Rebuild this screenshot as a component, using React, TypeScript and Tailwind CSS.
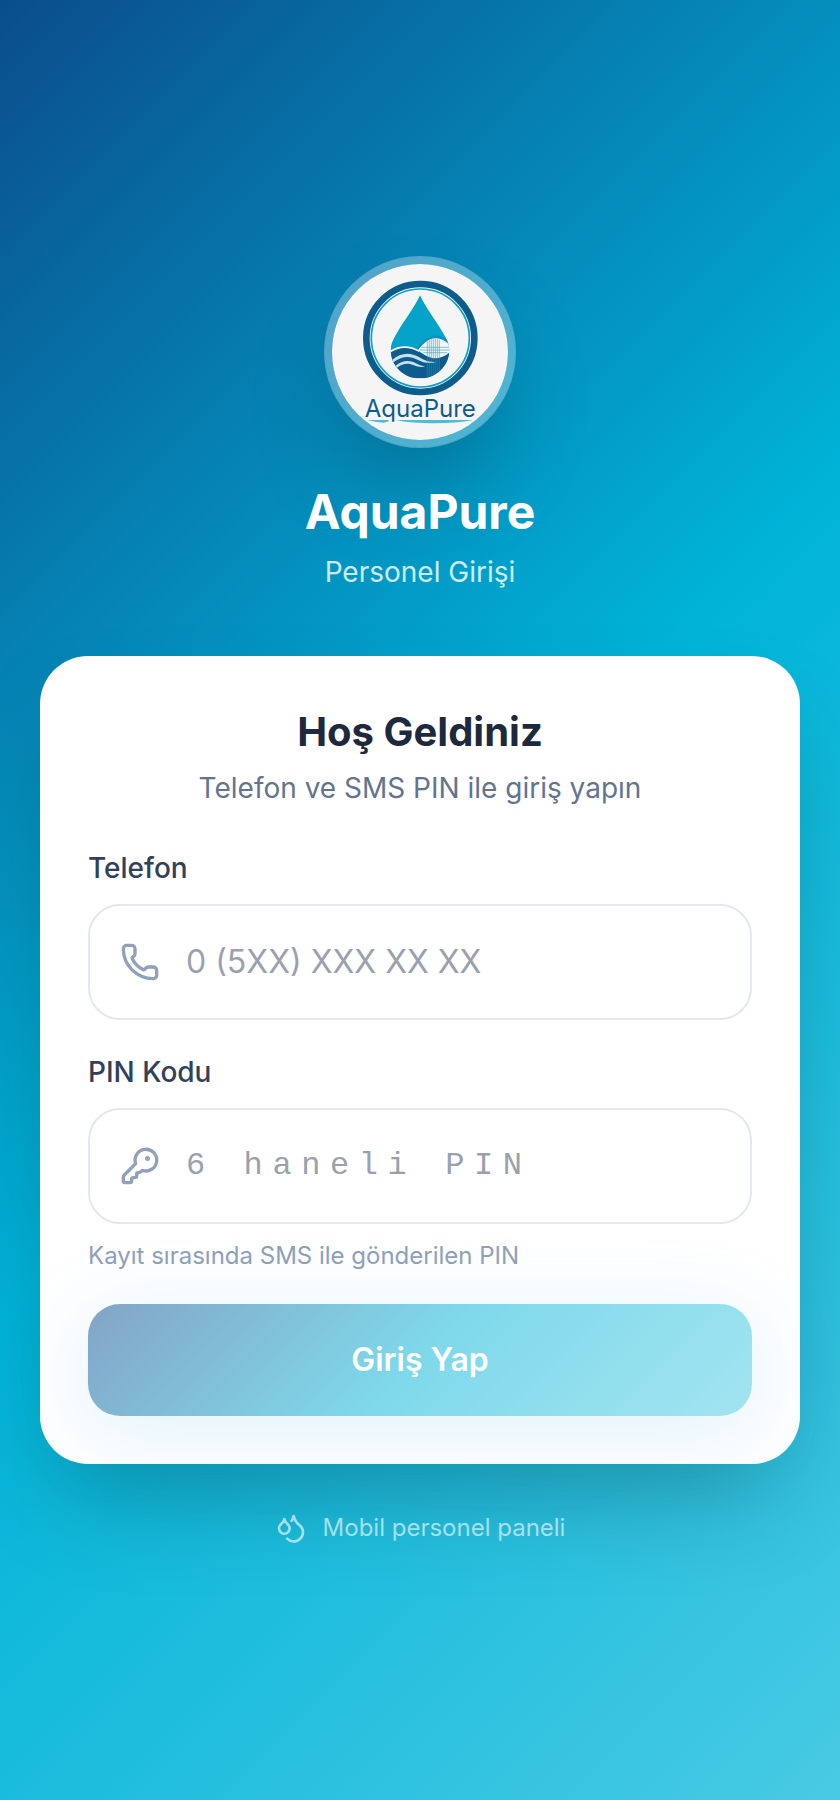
import React, { useState } from 'react'
import { Droplets, KeyRound, Phone } from 'lucide-react'

function AquaPureLogo() {
  return (
    <svg viewBox="66 72 528 528" className="h-full w-full" role="img" aria-label="AquaPure logo">
      <defs>
        <clipPath id="drop">
          <path d="M330 166 C345 200 375 238 397 275 C411 298 418 314 418 329 C418 377 379 415 330 415 C281 415 242 377 242 329 C242 314 249 298 263 275 C285 238 315 200 330 166 Z" />
        </clipPath>
      </defs>
      <circle cx="331" cy="294" r="162" fill="#f5f5f5" stroke="#0d5c8c" strokeWidth="20" />
      <circle cx="331" cy="294" r="147" fill="none" stroke="#0ba0c6" strokeWidth="5" />

      <g clipPath="url(#drop)">
        <rect x="230" y="160" width="200" height="260" fill="#05a3ca" />
        <path d="M322 328 C345 300 362 288 385 290 C400 292 410 299 420 310" fill="none" stroke="#0d93b8" strokeWidth="7" />
        <path d="M236 338 C268 316 296 316 328 336 C362 360 392 352 424 334 V420 H236 Z" fill="#0d5c8c" />
        <path d="M236 338 C268 316 296 316 328 334" fill="none" stroke="#f5f5f5" strokeWidth="5" />
        <path d="M324 331 C345 304 360 294 378 295 C398 296 410 306 422 318 V334 C402 352 384 357 366 354 C350 351 338 341 324 331 Z" fill="#f5f5f5" />
        <path d="M246 360 C272 338 300 336 328 352 C346 363 362 368 382 365 C360 373 340 368 322 359 C298 346 276 348 250 367 Z" fill="#c9e0ec" />
        <path d="M256 378 C276 361 298 359 318 370 C328 376 338 379 346 379 C334 383 322 380 312 376 C294 368 278 370 260 384 Z" fill="#c9e0ec" />
        <g stroke="#0ba0c6" strokeWidth="2" opacity="0.8">
          <path d="M352 302 V410 M358 299 V410 M364 297 V410 M370 296 V410 M376 296 V410 M382 297 V408 M388 299 V405" />
          <path d="M334 322 H420 M330 330 H420 M340 338 H412" />
        </g>
      </g>

      <text
        x="331"
        y="532"
        textAnchor="middle"
        className="font-[Inter,sans-serif] text-[72px]"
        fill="#0d5c8c"
      >
        AquaPure
      </text>
      <path d="M170 540 H236 V544 L222 548 Q196 546 170 540 Z M258 540 H490 Q440 550 372 550 Q300 550 258 540 Z" fill="#4fbdd8" />
    </svg>
  )
}

interface FieldProps {
  id: string
  label: string
  icon: React.ElementType
  children: React.ReactNode
}

function Field({ id, label, icon: Icon, children }: Readonly<FieldProps>) {
  return (
    <div>
      <label htmlFor={id} className="mb-4 block text-[28px] leading-10 font-medium text-slate-700">
        {label}
      </label>
      <div className="relative">
        <Icon className="pointer-events-none absolute top-1/2 left-8 h-10 w-10 -translate-y-1/2 text-slate-400" />
        {children}
      </div>
    </div>
  )
}

export default function App() {
  const [phone, setPhone] = useState('')
  const [pin, setPin] = useState('')

  return (
    <div className="flex min-h-screen flex-col items-center justify-center bg-[linear-gradient(135deg,#0a4d8c_0%,#00b4d8_50%,#48cae4_100%)] px-10 py-16 font-[Inter,sans-serif]">
      <header className="mb-16 text-center">
        <div className="mx-auto mb-8 h-48 w-48 overflow-hidden rounded-full border-8 border-white/30 bg-[#f5f5f5] bg-clip-padding shadow-[0_50px_100px_-24px_rgba(0,0,0,0.25)]">
          <AquaPureLogo />
        </div>
        <h1 className="text-5xl leading-16 font-bold text-white">AquaPure</h1>
        <p className="mt-2 text-[28px] leading-10 text-white/80">Personel Girişi</p>
      </header>

      <main className="w-full max-w-[768px] rounded-[48px] bg-white p-12 shadow-[0_50px_100px_-24px_rgba(0,0,0,0.25)]">
        <div className="mb-10 text-center">
          <h2 className="text-[40px] leading-14 font-bold text-slate-800">Hoş Geldiniz</h2>
          <p className="mt-2 text-[28px] leading-10 text-slate-500">Telefon ve SMS PIN ile giriş yapın</p>
        </div>

        <form className="flex flex-col gap-8" onSubmit={(e) => e.preventDefault()}>
          <Field id="phone" label="Telefon" icon={Phone}>
            <input
              id="phone"
              type="tel"
              value={phone}
              onChange={(e) => setPhone(e.target.value)}
              placeholder="0 (5XX) XXX XX XX"
              className="block w-full rounded-[32px] border-2 border-slate-200 py-8 pr-8 pl-24 text-[32px] leading-12 text-slate-800 outline-none placeholder:text-gray-400 focus:border-[#00b4d8]"
            />
          </Field>

          <div>
            <Field id="pin" label="PIN Kodu" icon={KeyRound}>
              <input
                id="pin"
                type="text"
                inputMode="numeric"
                maxLength={6}
                value={pin}
                onChange={(e) => setPin(e.target.value)}
                placeholder="6 haneli PIN"
                className="block w-full rounded-[32px] border-2 border-slate-200 py-8 pr-8 pl-24 font-['Liberation_Mono',monospace] text-[32px] leading-12 tracking-[0.3em] text-slate-800 outline-none placeholder:text-gray-400 focus:border-[#00b4d8]"
              />
            </Field>
            <p className="mt-4 text-2xl leading-8 text-slate-400">Kayıt sırasında SMS ile gönderilen PIN</p>
          </div>

          <button
            type="submit"
            disabled={!phone || pin.length < 6}
            className="w-full rounded-[32px] bg-[linear-gradient(135deg,#0a4d8c_0%,#00b4d8_50%,#48cae4_100%)] py-8 text-[32px] leading-12 font-semibold text-white shadow-[0_16px_80px_rgba(14,165,233,0.25)] disabled:opacity-50"
          >
            Giriş Yap
          </button>
        </form>
      </main>

      <footer className="mt-12 flex items-center gap-4 text-2xl leading-8 text-white/60">
        <Droplets className="h-8 w-8" />
        <span>Mobil personel paneli</span>
      </footer>
    </div>
  )
}
